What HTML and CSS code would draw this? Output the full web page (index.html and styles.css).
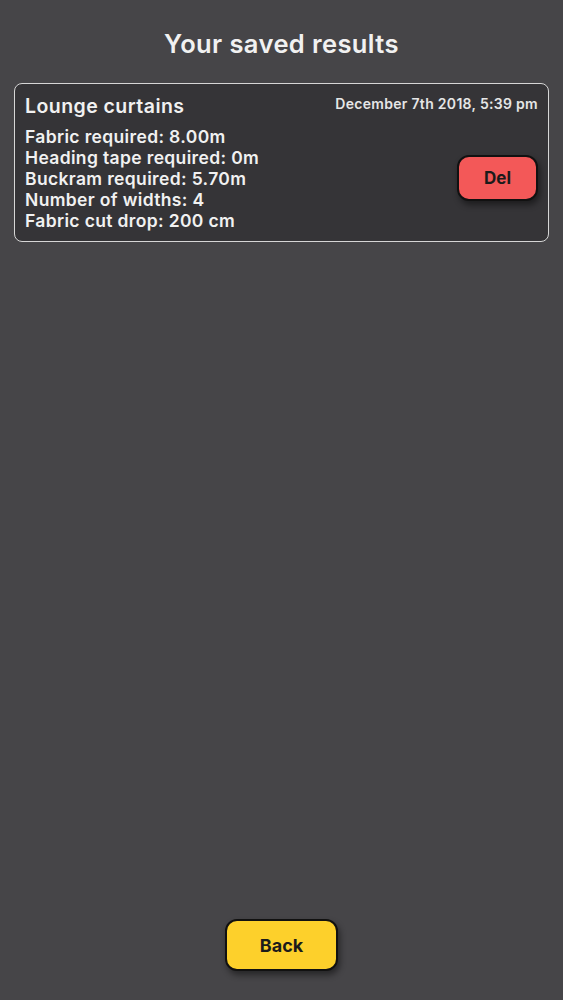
FILE: index.html
```html
<!DOCTYPE html>
<html lang="en">
<head>
    <meta charset="UTF-8">
    <meta name="viewport" content="width=device-width, initial-scale=1.0">
    <title>Your saved results</title>
    <link rel="stylesheet" href="styles.css">
</head>
<body>
    <!-- Header -->
    <header>
        <h1>Your saved results</h1>
    </header>

    <!-- Saved results list -->
    <main>
        <div class="result-card">
            <div class="result-info">
                <h2>Lounge curtains</h2>
                <p>Fabric required: 8.00m</p>
                <p>Heading tape required: 0m</p>
                <p>Buckram required: 5.70m</p>
                <p>Number of widths: 4</p>
                <p>Fabric cut drop: 200 cm</p>
            </div>
            <div class="result-side">
                <span class="result-date">December 7th 2018, 5:39 pm</span>
                <button class="btn btn-del">Del</button>
            </div>
        </div>
    </main>

    <!-- Footer -->
    <footer>
        <button class="btn btn-back">Back</button>
    </footer>
</body>
</html>
```

FILE: styles.css
```css
/* General */
body {
    margin: 0;
    font-family: Inter, "Noto Sans", sans-serif;
    background-color: #464548;
    color: #f1f1f1;
    display: flex;
    flex-direction: column;
    min-height: 100vh;
}

/* Header */
header {
    padding-top: 29px;
    text-align: center;
}

header h1 {
    margin: 0;
    font-size: 25.5px;
    line-height: 30px;
    font-weight: 600;
    letter-spacing: 0.4px;
}

/* Main */
main {
    flex: 1;
    padding: 24px 14px 0;
}

.result-card {
    display: flex;
    justify-content: space-between;
    background-color: #353437;
    border: 1.5px solid #d6d6d6;
    border-radius: 8px;
    padding: 10px 10px 10px 10px;
}

.result-info h2 {
    margin: 0 0 8px;
    font-size: 19.5px;
    line-height: 24px;
    font-weight: 600;
    letter-spacing: 0.45px;
}

.result-info p {
    margin: 0;
    font-size: 17.5px;
    line-height: 21px;
    font-weight: 600;
    letter-spacing: 0.35px;
}

.result-side {
    display: flex;
    flex-direction: column;
    align-items: flex-end;
}

.result-date {
    font-size: 14px;
    line-height: 18px;
    font-weight: 600;
    letter-spacing: 0.3px;
    color: #e6e6e6;
    margin-top: 1px;
}

/* Buttons */
.btn {
    font-family: Inter, "Noto Sans", sans-serif;
    font-weight: 700;
    color: #1b1b1b;
    border: 2px solid #111111;
    border-radius: 12px;
    box-shadow: 2px 4px 6px rgba(0, 0, 0, 0.45);
    cursor: pointer;
}

.btn-del {
    margin-top: 42px;
    margin-right: 0;
    width: 81px;
    height: 46px;
    font-size: 17px;
    background-color: #f35858;
}

/* Footer */
footer {
    display: flex;
    justify-content: center;
    padding-bottom: 29px;
}

.btn-back {
    width: 113px;
    height: 52px;
    font-size: 18px;
    background-color: #fdd02b;
}
```
